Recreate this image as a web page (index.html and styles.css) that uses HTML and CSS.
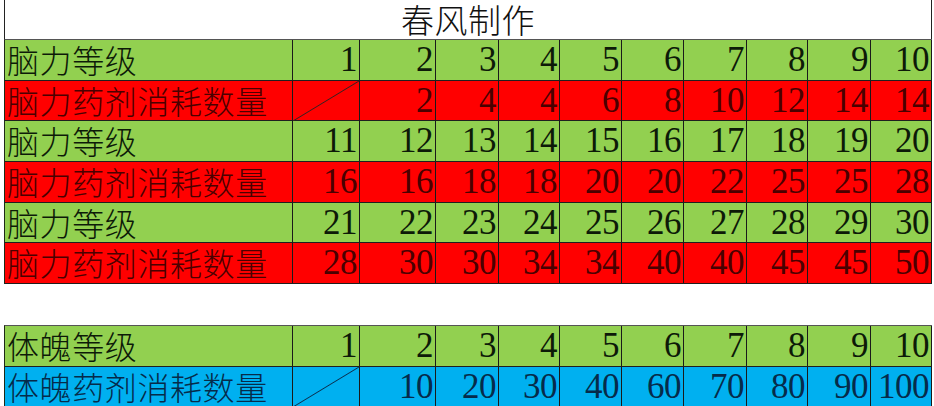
FILE: index.html
```html
<!DOCTYPE html>
<html>
<head>
<meta charset="utf-8">
<title>春风制作</title>
<link rel="stylesheet" href="styles.css">
</head>
<body>
<div class="sheet">
  <div class="title">春风制作</div>

  <div class="row green first h41">
    <div class="label">脑力等级</div>
    <div class="num">1</div><div class="num">2</div><div class="num">3</div><div class="num">4</div><div class="num">5</div>
    <div class="num">6</div><div class="num">7</div><div class="num">8</div><div class="num">9</div><div class="num">10</div>
  </div>
  <div class="row red h40">
    <div class="label">脑力药剂消耗数量</div>
    <div class="num slash"></div><div class="num">2</div><div class="num">4</div><div class="num">4</div><div class="num">6</div>
    <div class="num">8</div><div class="num">10</div><div class="num">12</div><div class="num">14</div><div class="num">14</div>
  </div>
  <div class="row green h41">
    <div class="label">脑力等级</div>
    <div class="num">11</div><div class="num">12</div><div class="num">13</div><div class="num">14</div><div class="num">15</div>
    <div class="num">16</div><div class="num">17</div><div class="num">18</div><div class="num">19</div><div class="num">20</div>
  </div>
  <div class="row red h41">
    <div class="label">脑力药剂消耗数量</div>
    <div class="num">16</div><div class="num">16</div><div class="num">18</div><div class="num">18</div><div class="num">20</div>
    <div class="num">20</div><div class="num">22</div><div class="num">25</div><div class="num">25</div><div class="num">28</div>
  </div>
  <div class="row green h40">
    <div class="label">脑力等级</div>
    <div class="num">21</div><div class="num">22</div><div class="num">23</div><div class="num">24</div><div class="num">25</div>
    <div class="num">26</div><div class="num">27</div><div class="num">28</div><div class="num">29</div><div class="num">30</div>
  </div>
  <div class="row red h41">
    <div class="label">脑力药剂消耗数量</div>
    <div class="num">28</div><div class="num">30</div><div class="num">30</div><div class="num">34</div><div class="num">34</div>
    <div class="num">40</div><div class="num">40</div><div class="num">45</div><div class="num">45</div><div class="num">50</div>
  </div>

  <div class="gap"></div>

  <div class="row green first h41">
    <div class="label">体魄等级</div>
    <div class="num">1</div><div class="num">2</div><div class="num">3</div><div class="num">4</div><div class="num">5</div>
    <div class="num">6</div><div class="num">7</div><div class="num">8</div><div class="num">9</div><div class="num">10</div>
  </div>
  <div class="row blue h41">
    <div class="label">体魄药剂消耗数量</div>
    <div class="num slash"></div><div class="num">10</div><div class="num">20</div><div class="num">30</div><div class="num">40</div>
    <div class="num">60</div><div class="num">70</div><div class="num">80</div><div class="num">90</div><div class="num">100</div>
  </div>
</div>
</body>
</html>
```

FILE: styles.css
```css
html, body {
  margin: 0;
  padding: 0;
  background: #ffffff;
  overflow: hidden;
}

.sheet {
  padding-left: 4px;
  width: 928px;
  display: flex;
  flex-direction: column;
}

.title {
  box-sizing: border-box;
  height: 39px;
  border-left: 1px solid #222;
  border-right: 1px solid #222;
  font-family: "Noto Sans CJK SC", sans-serif;
  font-weight: 300;
  font-size: 33px;
  line-height: 38px;
  text-align: center;
  color: #111;
  letter-spacing: 0.5px;
}

.row {
  box-sizing: border-box;
  display: grid;
  grid-template-columns: 288px 67px 76px 63px 61px 62px 62px 63px 61px 63px 61px;
  border-left: 1px solid #1e2a18;
  border-bottom: 1px solid #1f1f1f;
}

.row.first {
  border-top: 1px solid #555;
}

.h40 { height: 40px; }
.h41 { height: 41px; }
.row.first.h41 { height: 42px; }

.gap {
  height: 41px;
}

.label, .num {
  box-sizing: border-box;
  border-right: 1px solid #1a1a1a;
  white-space: nowrap;
}

.label {
  font-family: "Noto Sans CJK SC", sans-serif;
  font-weight: 300;
  font-size: 32px;
  letter-spacing: 0.6px;
  line-height: 38px;
  padding-left: 2px;
}

.row .num {
  font-family: "Liberation Serif", serif;
  font-size: 35px;
  line-height: 40px;
  text-align: right;
  padding-right: 2px;
  letter-spacing: -0.5px;
}

.green { background: #92d050; color: #0d1a08; }
.red { background: #ff0000; color: #4a0000; }
.blue { background: #00b0f0; color: #062b4a; }

.slash {
  background: linear-gradient(to bottom right,
    transparent calc(50% - 0.9px),
    #3a2020 50%,
    transparent calc(50% + 0.9px));
}
.blue .slash {
  background: linear-gradient(to bottom right,
    transparent calc(50% - 0.9px),
    #0a3050 50%,
    transparent calc(50% + 0.9px));
}
```
